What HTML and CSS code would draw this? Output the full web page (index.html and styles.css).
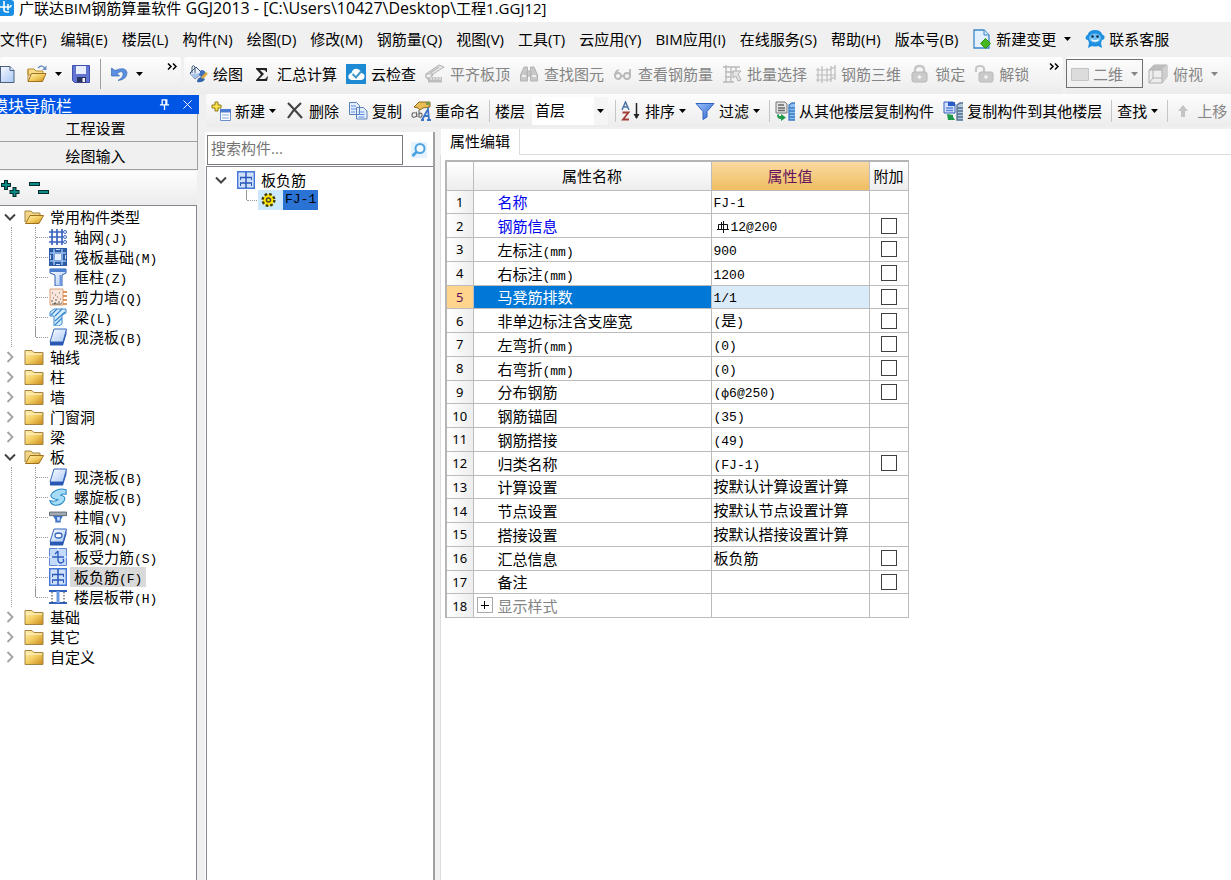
FILE: index.html
```html
<!DOCTYPE html>
<html lang="zh-CN">
<head>
<meta charset="utf-8">
<title>广联达BIM钢筋算量软件 GGJ2013</title>
<link rel="stylesheet" href="styles.css">
</head>
<body>
<svg class="defs" aria-hidden="true">
  <defs>
    <linearGradient id="gold" x1="0" y1="0" x2="1" y2="1"><stop offset="0" stop-color="#fff3b8"/><stop offset=".5" stop-color="#f3cd62"/><stop offset="1" stop-color="#c98a1c"/></linearGradient>
    <linearGradient id="sky" x1="0" y1="0" x2="1" y2="1"><stop offset="0" stop-color="#fff"/><stop offset="1" stop-color="#a9c8f5"/></linearGradient>
    <linearGradient id="deep" x1="0" y1="0" x2="1" y2="1"><stop offset="0" stop-color="#9cc4ff"/><stop offset="1" stop-color="#2a5ec9"/></linearGradient>
  </defs>
  <symbol id="down" viewBox="0 0 7 4"><path d="M0 0h7L3.500 4z" fill="currentColor"/></symbol>
  <symbol id="more" viewBox="0 0 10 7"><path d="M1 .5l3 3-3 3M6 .5l3 3-3 3" fill="none" stroke="#000" stroke-width="1.500"/></symbol>
  <symbol id="logo" viewBox="0 0 14 17"><path d="M-4 0h15q3 0 3 3v10q0 3-3 3H-4z" fill="#1b8fe6"/><path d="M0 7h10q1 0 1-2M4 1v9q0 2 3 2h2M8 4v6" fill="none" stroke="#fff" stroke-width="1.600"/></symbol>
  <symbol id="doc" viewBox="0 0 16 20"><path d="M-4 2.500H10l4 4V18.500H-4z" fill="url(#sky)" stroke="#4a5f80"/><path d="M10 2.500v4h4" fill="#dce8f8" stroke="#4a5f80"/><path d="M.5 2.500v16" stroke="#4a5f80"/></symbol>
  <symbol id="open" viewBox="0 0 20 20"><path d="M1 5h6l2 2h7v4H1z" fill="#f6dd8c" stroke="#b98a2c"/><path d="M1 5v12" stroke="#b98a2c"/><path d="M1 17.500L4.500 9.500H19L15.500 17.500z" fill="url(#gold)" stroke="#a0711b"/><path d="M11 4q4-4 7 .5" fill="none" stroke="#6c91bd" stroke-width="1.500"/><path d="M19.500 1.500v4.500h-4.500z" fill="#6c91bd"/></symbol>
  <symbol id="save" viewBox="0 0 20 20"><path d="M1.500 1.500h17v17h-15l-2-2z" fill="#6274d2" stroke="#3f4fae"/><path d="M5 2h10v8H5z" fill="#e8edff"/><path d="M6 13h9v5.500H6z" fill="#2b3460"/><path d="M11.500 14h2.500v4h-2.500z" fill="#eee"/></symbol>
  <symbol id="undo" viewBox="0 0 18 20"><path d="M1.500 4v8h8L7 9.500q5-3.500 6-.5 1 4-5 7.500 9-1 9-8Q15.500 2 5 6.500z" fill="#5b8fe0" stroke="#3567b5" stroke-width=".7"/></symbol>
  <symbol id="paint" viewBox="0 0 20 20"><path d="M2 9l6-6 6 6-7 6z" fill="#e9f0fa" stroke="#3b5478"/><path d="M4 9V3q1-3 3 0v6" fill="none" stroke="#3b5478"/><path d="M2 10l5 5 7-6z" fill="#a9c4e8"/><path d="M13 6q5 0 5 5l-3 4-4-4z" fill="#3f6fba"/><path d="M9 18q0-4 4-5l4 2q-2 4-8 3z" fill="#3565ae"/><path d="M14 14l5-5" stroke="#e0a83a" stroke-width="2.500"/></symbol>
  <symbol id="sigma" viewBox="0 0 20 20"><path d="M4 4h11v4h-1q0-2-3-2H8l4 4-5 5h5q2.500 0 3-2.500h1l-1 4.500H4v-1l5-5.500-5-5.500z" fill="#222"/></symbol>
  <symbol id="cloud" viewBox="0 0 20 20"><path d="M0 0h20v20H0z" fill="#1f8ad4"/><path d="M5.500 16q-4-1-3-4.500 1-2.500 3-2.500Q7 4 11.500 5q3.500 1 3.500 4 4 .5 3.500 4-.5 3-4 3z" fill="#fff"/><path d="M6.500 10l3.500 3.500L15 7.500" fill="none" stroke="#4597ca" stroke-width="2"/></symbol>
  <symbol id="align" viewBox="0 0 20 20"><path d="M1 10L14 1l5 2L8 10z" fill="#e8e8e8" stroke="#b0b0b0"/><path d="M5 9l9-6M1 10v3l3 3M8 10l-2 3" fill="none" stroke="#b8b8b8" stroke-width="1.500"/><path d="M3 13h14v5.500H3z" fill="#bdbdbd"/><path d="M6 13v3M9 13v3M12 13v3M15 13v3" stroke="#f3f3f3"/></symbol>
  <symbol id="find" viewBox="0 0 20 20"><path d="M1.500 17v-6l3.500-8h3.500v14zM18.500 17v-6L15 3h-3.500v14zM8 7h4v5H8z" fill="#c8c8c8" stroke="#b4b4b4"/><path d="M3 12h4M13 12h4" stroke="#eee" stroke-width="2"/></symbol>
  <symbol id="glasses" viewBox="0 0 20 20"><g fill="none" stroke="#b9b9b9" stroke-width="1.800"><circle cx="5" cy="12" r="3"/><circle cx="14" cy="12" r="3"/><path d="M2 12q0-5 4-6M8 12h3M17 12V5"/></g></symbol>
  <symbol id="batch" viewBox="0 0 20 20"><path d="M1 3h17M3 8h8M3 13h6M1 18h11M4 1v18M9 3v15M14 3v4" fill="none" stroke="#b9b9b9" stroke-width="1.300"/><path d="M11 7h8l-3 3 3 6-3 1-2-5-3 2z" fill="#e6e6e6" stroke="#b0b0b0"/></symbol>
  <symbol id="bar3d" viewBox="0 0 20 20"><path d="M0 6h13l6-3M0 11h20M0 16h13l6-3M2 4v14M6 2v17M11 4v14M15 2v16M19 1v15" fill="none" stroke="#bdbdbd" stroke-width="1.200"/></symbol>
  <symbol id="lock" viewBox="0 0 20 20"><path d="M5 10V6q0-4 4.500-4T14 6v4" fill="none" stroke="#c8c8c8" stroke-width="2.500"/><rect x="2" y="8" width="15" height="10" rx="2" fill="#cacaca" stroke="#b8b8b8"/><path d="M9.500 11v4M7.500 13h4" stroke="#f4f4f4" stroke-width="1.500"/></symbol>
  <symbol id="unlock" viewBox="0 0 20 20"><path d="M2 8V5q0-3 4-3t4 3v4" fill="none" stroke="#c8c8c8" stroke-width="2.200"/><rect x="5" y="8" width="14" height="10" rx="2" fill="#cacaca" stroke="#b8b8b8"/><path d="M12 11v4M10 13h4" stroke="#f4f4f4" stroke-width="1.500"/></symbol>
  <symbol id="plane" viewBox="0 0 20 20"><path d="M1.500 4.500h17v12h-17z" fill="#dcdcdc" stroke="#c4c4c4"/></symbol>
  <symbol id="cube" viewBox="0 0 20 20"><path d="M1 6l5-5h13v12l-5 6H1z" fill="#ededed" stroke="#b0b0b0"/><path d="M1 6l5-5h13l-5 5z" fill="#bdbdbd"/><path d="M14 6v13l5-6V1z" fill="#cfcfcf"/><path d="M1 6h13v13M5 6v8h9M5 14l-4 5" fill="none" stroke="#b0b0b0"/></symbol>
  <symbol id="change" viewBox="0 0 20 20"><path d="M2 1h10l5 5v13H2z" fill="#e3f1ff" stroke="#3c86c6" stroke-width="1.300"/><path d="M12 1v5h5" fill="#cfe4fa" stroke="#3c86c6"/><path d="M13.500 9.500l5 5-5 5-5-5z" fill="#46b81f" stroke="#2f8d12"/></symbol>
  <symbol id="service" viewBox="0 0 20 20"><path d="M10 1q6 0 7.500 5 2.500 0 2 3-.5 2-2.500 2l-1 3 1 5-4-2q-3 1-6 0L3 19l1-5-1-3Q.5 11 .5 8.500 1 6 2.500 6 4 1 10 1z" fill="#1f8fe0"/><ellipse cx="10" cy="9" rx="6" ry="4.500" fill="#6dbff8"/><circle cx="7.500" cy="7.500" r="1.200" fill="#123"/><circle cx="12.500" cy="7.500" r="1.200" fill="#123"/><path d="M6.500 10.500q3.500 3 7 0" stroke="#fff" fill="none" stroke-width="1.300"/></symbol>
  <symbol id="add" viewBox="0 0 20 20"><path d="M4 1h3v3h3v3H7v3H4V7H1V4h3z" fill="#ffe14a" stroke="#8c7a1a"/><path d="M9.500 8.500h10v11h-10z" fill="#fff" stroke="#6b8fc8"/><path d="M9 8h11v3.500H9z" fill="#4a7bd0"/><path d="M11 14h7M11 17h7" stroke="#a8c3ea" stroke-width="1.500"/></symbol>
  <symbol id="del" viewBox="0 0 20 20"><path d="M3 2q6 6 14 15M16 2Q8 9 3 17" fill="none" stroke="#444" stroke-width="2.200"/></symbol>
  <symbol id="copy" viewBox="0 0 20 20"><path d="M1.500 1.500h7l3 3v9h-10zM8.500 6.500h7l3.500 3.500v8h-10.500z" fill="#e4eefc" stroke="#5c82bd"/><path d="M3 5h5M3 8h5M3 11h4M10.500 11h6M10.500 13.500h6M10.500 16h6" stroke="#5d8de0"/></symbol>
  <symbol id="rename" viewBox="0 0 20 20"><path d="M3 6l5-5h11v5l-7 1-3 2-2-2z" fill="#e9bd53" stroke="#8c6a20"/><path d="M15 1h4v3h-4z" fill="#7a9a4b"/><path d="M4 12q-3-1-3 2t3 2 1-5l1 5M8 9v7q3 1 3-2t-3-1" fill="none" stroke="#666" stroke-width="1.200"/><path d="M11 19l6-11 1 11M13 15h5M10 19h3M16 19h4" fill="none" stroke="#3d74c9" stroke-width="1.800"/></symbol>
  <symbol id="sort" viewBox="0 0 20 20"><path d="M1 9l3.500-8L8 9M2.500 6h4" fill="none" stroke="#4a74a8" stroke-width="1.500"/><path d="M1.500 11.500h6L2 18.500h6" fill="none" stroke="#a23c34" stroke-width="1.800"/><path d="M15.500 2v15" stroke="#222" stroke-width="1.500"/><path d="M12.500 13h6l-3 5z" fill="#222"/></symbol>
  <symbol id="filter" viewBox="0 0 20 20"><path d="M1 2.500h18l-7 8V16l-4 2.500v-8z" fill="url(#deep)" stroke="#3264bf"/></symbol>
  <symbol id="from" viewBox="0 0 20 20"><path d="M1 1h9l2 2v9H1z" fill="#e4e4e4" stroke="#777"/><path d="M3 4h6M3 7h7M3 9.500h7" stroke="#666" stroke-width="1.300"/><path d="M4 13v2h2v-2l5 3.500-5 3.500v-2q-4 0-4-4z" fill="#1e9a48"/><path d="M20 2h-3l-3 2v15h6z" fill="#8fc0f0"/><path d="M20 2h-3l-3 2v15h6M14 7h6M14 10h6M14 13h6M14 16h6" fill="none" stroke="#3d7cc4" stroke-width="1.300"/></symbol>
  <symbol id="to" viewBox="0 0 20 20"><path d="M1 1h9l2 2v9H1z" fill="#d4e2ff" stroke="#3660b6"/><path d="M5 1h7v4H5z" fill="#2b5ac4"/><path d="M3 7h7M3 9.500h7" stroke="#5d84d8" stroke-width="1.300"/><path d="M4 13l6 1v2l2 3H5z" fill="#1e9a48"/><path d="M20 2h-3l-3 2v15h6z" fill="#b4c8dc"/><path d="M20 2h-3l-3 2v15h6M14 7h6M14 10h6M14 13h6M14 16h6" fill="none" stroke="#53708f" stroke-width="1.300"/></symbol>
  <symbol id="up" viewBox="0 0 20 20"><path d="M10 4l5 6h-3v6H8v-6H5z" fill="#c4c4c4"/></symbol>
  <symbol id="pin" viewBox="0 0 12 12"><path d="M3.500 6V1h5v5M1 6.500h10M6 7v5M7.500 1v5" fill="none" stroke="#fff" stroke-width="1.400"/></symbol>
  <symbol id="close" viewBox="0 0 12 12"><path d="M1.500 1.500l9 9M10.500 1.500l-9 9" stroke="#fff"/></symbol>
  <symbol id="plus2" viewBox="0 0 20 20"><path d="M6 2v10M1 7h10M14.500 9v10M9.500 14h10" stroke="#042c2c" stroke-width="4"/><path d="M6 3v8M2 7h8M14.500 10v8M10.500 14h8" stroke="#0c8c86" stroke-width="1.800"/></symbol>
  <symbol id="minus2" viewBox="0 0 20 20"><path d="M0 6h11M9 14h11" stroke="#042c2c" stroke-width="4"/><path d="M1 6h9M10 14h9" stroke="#0c8c86" stroke-width="1.800"/></symbol>
  <symbol id="mag" viewBox="0 0 20 20"><path d="M2 2h16v16H2z" fill="#e6f3fc"/><circle cx="11" cy="8.500" r="4.500" fill="#f3faff" stroke="#4da3e2" stroke-width="2"/><path d="M7.500 12l-4 4" stroke="#4da3e2" stroke-width="3"/></symbol>
  <symbol id="opened" viewBox="0 0 12 20"><path d="M1 7.500l5 5 5-5" fill="none" stroke="#444" stroke-width="2"/></symbol>
  <symbol id="closed" viewBox="0 0 12 20"><path d="M3.500 5l5 5-5 5" fill="none" stroke="#a2a2a2" stroke-width="1.800"/></symbol>
  <symbol id="fold" viewBox="0 0 20 20"><path d="M1 3.500h7l2 2h9v12H1z" fill="url(#gold)" stroke="#a58442"/><path d="M2 7h16" stroke="#fff6cf"/></symbol>
  <symbol id="foldopen" viewBox="0 0 20 20"><path d="M1 15V4h6l2 2h7v4" fill="#f0d689" stroke="#a58442"/><path d="M1.500 16.500L6 8.500h13.500L15 16.500z" fill="url(#gold)" stroke="#a0711b"/></symbol>
  <symbol id="axis" viewBox="0 0 18 18"><path d="M0 4h14M0 9h14M0 14h14M3 1v16M8 1v16M13 1v16" stroke="#3b66be" stroke-width="1.700"/><g fill="#fff" stroke="#3b66be"><circle cx="16" cy="4" r="1.500"/><circle cx="16" cy="9" r="1.500"/><circle cx="16" cy="14" r="1.500"/></g></symbol>
  <symbol id="raft" viewBox="0 0 18 18"><path d="M0 0h18v18H0z" fill="#2d5ca6"/><path d="M5 1v16M13 1v16M1 5h16M1 13h16" stroke="#9cc0ee" stroke-width="1.500"/><path d="M6 6h6v6H6z" fill="#e4f0ff"/><path d="M7 1.500h4M7 16.500h4M1.500 7v4M16.500 7v4" stroke="#cfe2fb"/></symbol>
  <symbol id="column" viewBox="0 0 18 18"><path d="M1 1h16v4l-4 2v11H6V7L1 5z" fill="url(#sky)" stroke="#2c5db8"/><path d="M1 1h16v3H1z" fill="#4b7fd0"/><path d="M11.500 7v11" stroke="#6e9ae0" stroke-width="2"/></symbol>
  <symbol id="wall" viewBox="0 0 18 18"><path d="M1 1h13v16H1z" fill="#f8e6dc" stroke="#d9a078"/><path d="M3 5h1M6 7h1M10 5h1M4 10h1M8 9h1M11 11h1M2 13h2M5 15h2M6 12h2M9 14h2M12 15h1M3 16h9" stroke="#665" stroke-width="1.200"/><path d="M14 4h4M14 8h4M14 12h4M14 16h4" stroke="#d9762a" stroke-width="1.500"/></symbol>
  <symbol id="beam" viewBox="0 0 18 18"><path d="M1 4l4-3h12v4l-4 2v9l-3 2H5V8H1z" fill="#d6edfd" stroke="#3a88cc"/><path d="M2 7l6-6M6 8l7-7M6 13l10-9M6 17l7-7" stroke="#3a88cc" stroke-width="1.200"/></symbol>
  <symbol id="slab" viewBox="0 0 18 18"><path d="M5 1h12.500L14 14H1z" fill="url(#sky)" stroke="#3567bd"/><path d="M1 14h13l3.500-12v4L14 17.500H1z" fill="#2858b3"/></symbol>
  <symbol id="spiral" viewBox="0 0 20 20"><path d="M7 3q5-3 12-1v5q-5-1-6 1 6 1 4 6-4 6-11 5-4-1-5-5 6 2 9-1-8-1-8-5 1-3 5-5z" fill="#a6dcf8" stroke="#2a8bc8" stroke-width="1.200"/></symbol>
  <symbol id="cap" viewBox="0 0 20 20"><path d="M.5 4.500h19v4H.5z" fill="#a4aab2" stroke="#59616e"/><path d="M4.500 9h11l-2.500 4v3H7v-3z" fill="#3e72c8"/><path d="M9 10h3v4H9z" fill="#c2dcff"/></symbol>
  <symbol id="hole" viewBox="0 0 18 18"><path d="M5 1h12.500L14 14H1z" fill="url(#sky)" stroke="#3567bd"/><path d="M1 14h13l3.500-12v4L14 17.500H1z" fill="#2858b3"/><ellipse cx="9.500" cy="7.500" rx="3.500" ry="2.500" fill="#fff" stroke="#3567bd" stroke-width="1.300"/></symbol>
  <symbol id="mainbar" viewBox="0 0 18 18"><path d="M.5.500h17v17H.5z" fill="#c4dafa" stroke="#5c88d4"/><path d="M9 0v18M0 9h18" stroke="#e6f0ff"/><path d="M3 9h12M9 3l-3 3M9 3v9q0 3 3 3 4-1 2-4" fill="none" stroke="#2c5dbd" stroke-width="1.400"/></symbol>
  <symbol id="negbar" viewBox="0 0 18 18"><path d="M.7.700h16.600v16.600H.7z" fill="#cfe0fb" stroke="#4477d6" stroke-width="1.400"/><path d="M9 1v16M3 6.500h12M3 12h12" fill="none" stroke="#2857b8" stroke-width="1.500"/><path d="M3.500 6v3M14.500 6v3M3.500 12v3M14.500 12v3" stroke="#2857b8"/></symbol>
  <symbol id="strip" viewBox="0 0 18 18"><path d="M0 3h18M0 15h18" stroke="#2f62bd" stroke-width="2"/><path d="M3 4v11M15 4v11" stroke="#333" stroke-dasharray="1.500 1.500"/><path d="M9 3v12" stroke="#6d9ae0" stroke-width="3"/></symbol>
  <symbol id="gear" viewBox="0 0 18 18"><circle cx="9" cy="9" r="6" fill="#ffe500" stroke="#443f00" stroke-width="3" stroke-dasharray="2.700 2"/><circle cx="9" cy="9" r="5" fill="#ffe500"/><circle cx="9" cy="9" r="2.200" fill="#ffe500" stroke="#443" stroke-width="1.500"/></symbol>
  <symbol id="rebar" viewBox="0 0 12 12"><path d="M1.500 3.500h9v5h-9zM6.500 0v12M0 8.500h12M4.500 1v8" fill="none" stroke="#111"/></symbol>
</svg>

<header class="titlebar"><svg class="logo"><use href="#logo"/></svg><h1>广联达BIM钢筋算量软件<span class="path"> GGJ2013 - [C:\Users\10427\Desktop\</span>工程1.GGJ12]</h1></header>

<nav class="menubar">
  <button>文件(F)</button><button>编辑(E)</button><button>楼层(L)</button><button>构件(N)</button><button>绘图(D)</button><button>修改(M)</button><button>钢筋量(Q)</button><button>视图(V)</button><button>工具(T)</button><button>云应用(Y)</button><button>BIM应用(I)</button><button>在线服务(S)</button><button>帮助(H)</button><button>版本号(B)</button>
  <button><svg class="ic"><use href="#change"/></svg>新建变更<svg class="caret far"><use href="#down"/></svg></button>
  <button><svg class="ic"><use href="#service"/></svg>联系客服</button>
</nav>

<div class="bars">
  <div class="bar quick">
    <button aria-label="新建"><svg class="doc"><use href="#doc"/></svg></button>
    <button aria-label="打开"><svg class="ic"><use href="#open"/></svg><svg class="caret far"><use href="#down"/></svg></button>
    <button aria-label="保存"><svg class="ic"><use href="#save"/></svg></button>
    <span class="sep tall"></span>
    <button aria-label="撤销"><svg class="undo"><use href="#undo"/></svg><svg class="caret far"><use href="#down"/></svg></button>
    <button class="more" aria-label="更多"><svg><use href="#more"/></svg></button>
  </div>
  <div class="bar draw">
    <button><svg class="ic"><use href="#paint"/></svg>绘图</button>
    <button><svg class="ic"><use href="#sigma"/></svg>汇总计算</button>
    <button><svg class="ic"><use href="#cloud"/></svg>云检查</button>
    <button disabled><svg class="ic"><use href="#align"/></svg>平齐板顶</button>
    <button disabled><svg class="ic"><use href="#find"/></svg>查找图元</button>
    <button disabled><svg class="ic"><use href="#glasses"/></svg>查看钢筋量</button>
    <button disabled><svg class="ic"><use href="#batch"/></svg>批量选择</button>
    <button disabled><svg class="ic"><use href="#bar3d"/></svg>钢筋三维</button>
    <button disabled><svg class="ic"><use href="#lock"/></svg>锁定</button>
    <button disabled><svg class="ic"><use href="#unlock"/></svg>解锁</button>
    <button class="more" aria-label="更多"><svg><use href="#more"/></svg></button>
  </div>
  <div class="bar view">
    <button class="dim" disabled><svg class="ic"><use href="#plane"/></svg>二维<svg class="caret far"><use href="#down"/></svg></button>
    <button disabled><svg class="ic"><use href="#cube"/></svg>俯视<svg class="caret far"><use href="#down"/></svg></button>
  </div>
</div>

<main class="work">
  <aside class="side">
    <div class="side-title"><h2>模块导航栏</h2><button aria-label="固定"><svg><use href="#pin"/></svg></button><button aria-label="关闭"><svg><use href="#close"/></svg></button></div>
    <button class="section">工程设置</button>
    <button class="section">绘图输入</button>
    <div class="side-tools"><button aria-label="全部展开"><svg class="ic"><use href="#plus2"/></svg></button><button aria-label="全部折叠"><svg class="ic"><use href="#minus2"/></svg></button></div>
    <ul class="tree">
      <li><div class="node"><svg class="tw"><use href="#opened"/></svg><svg class="ic"><use href="#foldopen"/></svg>常用构件类型</div>
        <ul>
          <li><svg class="leaf"><use href="#axis"/></svg><span>轴网<b>(J)</b></span></li>
          <li><svg class="leaf"><use href="#raft"/></svg><span>筏板基础<b>(M)</b></span></li>
          <li><svg class="leaf"><use href="#column"/></svg><span>框柱<b>(Z)</b></span></li>
          <li><svg class="leaf"><use href="#wall"/></svg><span>剪力墙<b>(Q)</b></span></li>
          <li><svg class="leaf"><use href="#beam"/></svg><span>梁<b>(L)</b></span></li>
          <li><svg class="leaf"><use href="#slab"/></svg><span>现浇板<b>(B)</b></span></li>
        </ul></li>
      <li><div class="node"><svg class="tw"><use href="#closed"/></svg><svg class="ic"><use href="#fold"/></svg>轴线</div></li>
      <li><div class="node"><svg class="tw"><use href="#closed"/></svg><svg class="ic"><use href="#fold"/></svg>柱</div></li>
      <li><div class="node"><svg class="tw"><use href="#closed"/></svg><svg class="ic"><use href="#fold"/></svg>墙</div></li>
      <li><div class="node"><svg class="tw"><use href="#closed"/></svg><svg class="ic"><use href="#fold"/></svg>门窗洞</div></li>
      <li><div class="node"><svg class="tw"><use href="#closed"/></svg><svg class="ic"><use href="#fold"/></svg>梁</div></li>
      <li><div class="node"><svg class="tw"><use href="#opened"/></svg><svg class="ic"><use href="#foldopen"/></svg>板</div>
        <ul>
          <li><svg class="leaf"><use href="#slab"/></svg><span>现浇板<b>(B)</b></span></li>
          <li><svg class="leaf"><use href="#spiral"/></svg><span>螺旋板<b>(B)</b></span></li>
          <li><svg class="leaf"><use href="#cap"/></svg><span>柱帽<b>(V)</b></span></li>
          <li><svg class="leaf"><use href="#hole"/></svg><span>板洞<b>(N)</b></span></li>
          <li><svg class="leaf"><use href="#mainbar"/></svg><span>板受力筋<b>(S)</b></span></li>
          <li><svg class="leaf"><use href="#negbar"/></svg><span class="current">板负筋<b>(F)</b></span></li>
          <li><svg class="leaf"><use href="#strip"/></svg><span>楼层板带<b>(H)</b></span></li>
        </ul></li>
      <li><div class="node"><svg class="tw"><use href="#closed"/></svg><svg class="ic"><use href="#fold"/></svg>基础</div></li>
      <li><div class="node"><svg class="tw"><use href="#closed"/></svg><svg class="ic"><use href="#fold"/></svg>其它</div></li>
      <li><div class="node"><svg class="tw"><use href="#closed"/></svg><svg class="ic"><use href="#fold"/></svg>自定义</div></li>
    </ul>
  </aside>

  <section class="content">
    <div class="bar edit">
      <button><svg class="ic"><use href="#add"/></svg>新建<svg class="caret"><use href="#down"/></svg></button>
      <button><svg class="ic"><use href="#del"/></svg>删除</button>
      <button><svg class="ic"><use href="#copy"/></svg>复制</button>
      <button><svg class="ic"><use href="#rename"/></svg>重命名</button>
      <span class="sep"></span>
      <label class="floor">楼层<span class="pick"><select><option>首层</option></select><svg class="caret"><use href="#down"/></svg></span></label>
      <span class="sep"></span>
      <button><svg class="ic"><use href="#sort"/></svg>排序<svg class="caret"><use href="#down"/></svg></button>
      <button><svg class="ic"><use href="#filter"/></svg>过滤<svg class="caret"><use href="#down"/></svg></button>
      <span class="sep"></span>
      <button><svg class="ic"><use href="#from"/></svg>从其他楼层复制构件</button>
      <button><svg class="ic"><use href="#to"/></svg>复制构件到其他楼层</button>
      <span class="sep"></span>
      <button>查找<svg class="caret"><use href="#down"/></svg></button>
      <span class="sep"></span>
      <button disabled><svg class="ic"><use href="#up"/></svg>上移</button>
    </div>
    <div class="panels">
      <div class="parts">
        <div class="search"><input type="text" placeholder="搜索构件..." aria-label="搜索构件"><button aria-label="搜索"><svg class="ic"><use href="#mag"/></svg></button></div>
        <ul class="tree parts-tree">
          <li><div class="node"><svg class="tw"><use href="#opened"/></svg><svg class="leaf"><use href="#negbar"/></svg>板负筋</div>
            <ul><li><span class="picked"><svg class="leaf"><use href="#gear"/></svg><b>FJ-1</b></span></li></ul></li>
        </ul>
      </div>
      <div class="props">
        <div class="tabs"><button class="tab">属性编辑</button></div>
        <div class="sheet">
          <table>
            <colgroup><col class="c-num"><col class="c-name"><col class="c-val"><col class="c-add"></colgroup>
            <thead><tr><th></th><th>属性名称</th><th class="hot">属性值</th><th>附加</th></tr></thead>
            <tbody>
              <tr><th>1</th><td class="key">名称</td><td><b>FJ-1</b></td><td></td></tr>
              <tr><th>2</th><td class="key">钢筋信息</td><td><svg class="rebar" role="img" aria-label="三级钢"><use href="#rebar"/></svg><b>12@200</b></td><td><input type="checkbox" aria-label="钢筋信息"></td></tr>
              <tr><th>3</th><td>左标注<b>(mm)</b></td><td><b>900</b></td><td><input type="checkbox" aria-label="左标注"></td></tr>
              <tr><th>4</th><td>右标注<b>(mm)</b></td><td><b>1200</b></td><td><input type="checkbox" aria-label="右标注"></td></tr>
              <tr class="active"><th>5</th><td>马凳筋排数</td><td><b>1/1</b></td><td><input type="checkbox" aria-label="马凳筋排数"></td></tr>
              <tr><th>6</th><td>非单边标注含支座宽</td><td><b>(</b>是<b>)</b></td><td><input type="checkbox" aria-label="非单边标注含支座宽"></td></tr>
              <tr><th>7</th><td>左弯折<b>(mm)</b></td><td><b>(0)</b></td><td><input type="checkbox" aria-label="左弯折"></td></tr>
              <tr><th>8</th><td>右弯折<b>(mm)</b></td><td><b>(0)</b></td><td><input type="checkbox" aria-label="右弯折"></td></tr>
              <tr><th>9</th><td>分布钢筋</td><td><b>(ф6@250)</b></td><td><input type="checkbox" aria-label="分布钢筋"></td></tr>
              <tr><th>10</th><td>钢筋锚固</td><td><b>(35)</b></td><td></td></tr>
              <tr><th>11</th><td>钢筋搭接</td><td><b>(49)</b></td><td></td></tr>
              <tr><th>12</th><td>归类名称</td><td><b>(FJ-1)</b></td><td><input type="checkbox" aria-label="归类名称"></td></tr>
              <tr><th>13</th><td>计算设置</td><td>按默认计算设置计算</td><td></td></tr>
              <tr><th>14</th><td>节点设置</td><td>按默认节点设置计算</td><td></td></tr>
              <tr><th>15</th><td>搭接设置</td><td>按默认搭接设置计算</td><td></td></tr>
              <tr><th>16</th><td>汇总信息</td><td>板负筋</td><td><input type="checkbox" aria-label="汇总信息"></td></tr>
              <tr><th>17</th><td>备注</td><td></td><td><input type="checkbox" aria-label="备注"></td></tr>
              <tr class="muted"><th>18</th><td><button class="expand" aria-label="展开"></button>显示样式</td><td></td><td></td></tr>
            </tbody>
          </table>
        </div>
      </div>
    </div>
  </section>
</main>
</body>
</html>
```

FILE: styles.css
```css
* { box-sizing: border-box; }
body { margin: 0; height: 100vh; overflow: hidden; display: flex; flex-direction: column; background: #f0f0f0; color: #000; font: 15px/20px "Open Sans", "Noto Sans CJK SC", sans-serif; white-space: nowrap; }
button, input, select { font: inherit; color: inherit; }
button { border: 0; padding: 0; background: none; display: inline-flex; align-items: center; flex: none; }
svg { display: block; flex: none; }
ul { list-style: none; margin: 0; padding: 0; }
h1, h2 { margin: 0; font-weight: 400; }
b { font: 13px/13px "Liberation Mono", monospace; }
.defs { position: absolute; width: 0; height: 0; }
.ic { width: 20px; height: 20px; }
.leaf { width: 18px; height: 18px; }
.caret { width: 7px; height: 4px; margin-left: 4px; }
.caret.far { margin-left: 8px; }

.titlebar { display: flex; align-items: flex-start; height: 22px; background: #fff; }
.titlebar h1 { font-size: 15px; line-height: 16px; margin-left: 5px; }
.path { font-size: 16px; }
.logo { width: 14px; height: 17px; }

.menubar { display: flex; align-items: center; gap: 14px; height: 34px; overflow: hidden; }
.menubar .ic { margin-right: 4px; }

.bars { display: flex; gap: 3px; height: 37px; margin-top: 1px; overflow: hidden; }
.bar { display: flex; align-items: center; background: linear-gradient(#fdfdfd, #ececec); border-radius: 3px; }
.bars .bar { padding-bottom: 4px; }
.bar button:disabled { color: #858585; }
.quick { width: 181px; gap: 9px; }
.doc { width: 16px; height: 20px; }
.quick button:nth-child(2) { margin-left: 2px; }
.undo { width: 18px; height: 20px; }
.sep { width: 1px; height: 22px; background: #c6c6c6; flex: none; }
.sep.tall { height: 30px; background: #a0a0a0; }
.more { align-self: flex-start; margin: 6px 4px 0 auto; }
.more svg { width: 10px; height: 7px; }
.draw { width: 879px; padding-left: 4px; gap: 9px; }
.draw .ic { margin-right: 5px; }
.view { flex: 1; gap: 5px; min-width: 0; }
.view .ic { margin-right: 5px; }
.view .dim { height: 29px; padding: 0 4px 0 3px; border: 1px solid #707070; }
.view .dim .ic { margin-right: 3px; }

.work { flex: 1; min-height: 0; display: flex; gap: 6px; }
.side { width: 199px; flex: none; display: flex; flex-direction: column; font-family: "Noto Sans CJK SC", sans-serif; }
.side-title { display: flex; align-items: center; gap: 12px; height: 19px; margin-top: 1px; padding-right: 6px; background: #0055e5; color: #fff; }
.side-title h2 { font-size: 16px; line-height: 16px; margin-left: -8px; flex: 1; }
.side-title svg { width: 11px; height: 11px; }
.section { height: 28px; justify-content: center; margin-right: 1px; padding-right: 6px; border: solid #a0a0a0; border-width: 0 1px 1px 0; background: #f0f0f0; }
.section + .section { margin-bottom: 1px; }
.side-tools { display: flex; align-items: center; gap: 9px; height: 34px; margin-right: 2px; background: linear-gradient(#fdfdfd, #ececec); }
.tree { font-family: "Noto Sans CJK SC", sans-serif; background: #fff; }
.side .tree { flex: 1; margin-right: 2px; padding: 1px 0 0 4px; border: 1px solid #828790; border-width: 1px 1px 0 0; }
.node { display: flex; align-items: center; height: 20px; }
.tw { width: 12px; height: 20px; margin-right: 8px; }
.node .ic { margin-right: 6px; }
.tree ul { margin-left: 7px; padding-left: 23px; border-left: 1px dotted #999; }
.tree ul li { display: flex; align-items: center; height: 20px; border-left: 1px dotted #999; }
.tree ul li::before { content: ""; width: 12px; margin-right: 1px; border-top: 1px dotted #999; }
.tree ul li:last-child { border-image: linear-gradient(#999 50%, transparent 50%) 1; }
.tree ul .leaf { margin-right: 3px; }
.tree ul li > span { padding: 0 4px; }
.current { background: #d9d9d9; }

.content { flex: 1; min-width: 0; display: flex; flex-direction: column; }
.edit { height: 33px; padding-left: 5px; gap: 9px; margin-left: 1px; overflow: hidden; }
.edit .ic { margin-right: 4px; }
.edit .sep { margin-right: -4px; }
.floor { display: flex; align-items: center; gap: 7px; margin-right: -2px; }
.pick { position: relative; width: 76px; height: 28px; }
.pick select { width: 100%; height: 100%; appearance: none; border: 0; padding: 0 3px 2px; background: linear-gradient(90deg, #fff 62px, #f5f5f5 62px); }
.pick .caret { position: absolute; right: 4px; top: 12px; }
.panels { flex: 1; min-height: 0; display: flex; gap: 5px; }
.parts { width: 230px; margin-top: 5px; flex: none; display: flex; flex-direction: column; padding-left: 1px; background: #fff; border-right: 2px solid #a0a0a0; }
.search { display: flex; gap: 6px; padding: 3px 0 1px 1px; }
.search input { width: 196px; height: 30px; padding: 0 3px 4px; border: 1px solid #7a7a7a; background: #fff; }
.search input::placeholder { color: #757575; }
.parts-tree { flex: 1; border: solid #828790; border-width: 1px 0 0 1px; padding: 3px 0 0 8px; }
.parts-tree .leaf { margin-right: 6px; }
.parts-tree .tw { margin-right: 10px; }
.parts-tree ul { border-left-color: transparent; }
.parts-tree ul li > .picked { display: flex; align-items: center; padding: 0 0 0 2px; background: #cce8ff; margin-left: -2px; }
.parts-tree .picked .leaf { margin-right: 6px; width: 17px; }
.picked b { padding: 0 2px; line-height: 20px; background: #2a72d4; }

.props { flex: 1; min-width: 0; display: flex; flex-direction: column; padding-top: 2px; }
.tabs { display: flex; height: 26px; border-bottom: 1px solid #dcdcdc; background: #fff; margin-left: 1px; }
.tab { width: 79px; height: 26px; padding: 0 0 2px 9px; background: #fff; border-right: 1px solid #dcdcdc; font-family: "Noto Sans CJK SC", sans-serif; }
.sheet { flex: 1; padding: 5px 0 0 4px; background: #fff; border-left: 1px solid #dcdcdc; }
table { width: 463px; height: 458px; table-layout: fixed; border-collapse: collapse; border-top: 2px solid #b5b5b5; border-left: 2px solid #b5b5b5; font-family: "Noto Sans CJK SC", sans-serif; }
.c-num { width: 27px; }
.c-name { width: 238px; }
.c-val { width: 158px; }
.c-add { width: 39px; }
th, td { padding: 0; font-weight: 400; border: 1px solid #bcbcbc; text-align: left; line-height: 20px; }
thead th { height: 29px; text-align: center; background: linear-gradient(#fff, #ededed); }
thead .hot { background: linear-gradient(#fad9a0, #efbd62); color: #64105a; }
tbody tr { height: 23px; }
tbody th { text-align: center; font: 13px/20px "Noto Sans", sans-serif; background: linear-gradient(90deg, #fff, #ededed); }
td:nth-child(2) { padding-left: 24px; padding-top: 1px; }
td:nth-child(3) { padding-left: 2px; padding-bottom: 1px; }
td:nth-child(4) { text-align: center; }
.key { color: #0000f0; }
.active th { background: #ffd58d; color: #64105a; }
.active td:nth-child(2) { background: #0078d7; color: #fff; }
.active td:nth-child(3) { background: #d9eaf8; }
.muted td { color: #858585; }
.rebar { display: inline-block; width: 12px; height: 12px; margin: 0 2px -2px 3px; }
input[type="checkbox"] { appearance: none; display: block; width: 16px; height: 16px; margin: 0 auto; border: 1px solid #404040; background: #fff; }
.expand { width: 16px; height: 16px; margin: 0 5px -3px -21px; border: 1px solid #aaa; background: linear-gradient(#000, #000) center / 8px 1px no-repeat, linear-gradient(#000, #000) center / 1px 8px no-repeat, #fff; }
```
